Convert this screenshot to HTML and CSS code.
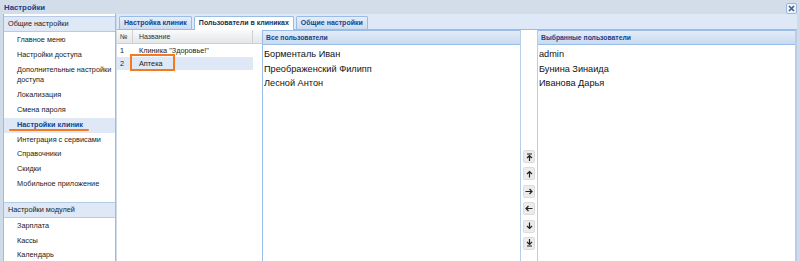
FILE: index.html
```html
<!DOCTYPE html>
<html lang="ru">
<head>
    <meta charset="UTF-8">
    <title>Настройки</title>
    <link rel="stylesheet" href="styles.css">
</head>
<body>
    <div class="window">
        <div class="titlebar">
            <span class="title">Настройки</span>
            <span class="close-btn">
                <svg width="7" height="7" viewBox="0 0 7 7"><path d="M1 1L6 6M6 1L1 6" stroke="#3a5f94" stroke-width="1.6"/></svg>
            </span>
        </div>

        <div class="main">
            <div class="sidebar">
                <div class="section-head">Общие настройки</div>
                <ul class="menu">
                    <li>Главное меню</li>
                    <li>Настройки доступа</li>
                    <li>Дополнительные настройки доступа</li>
                    <li>Локализация</li>
                    <li>Смена пароля</li>
                    <li class="active">Настройки клиник<span class="mark-line"></span></li>
                    <li>Интеграция с сервисами</li>
                    <li>Справочники</li>
                    <li>Скидки</li>
                    <li>Мобильное приложение</li>
                </ul>
                <div class="section-head">Настройки модулей</div>
                <ul class="menu">
                    <li>Зарплата</li>
                    <li>Кассы</li>
                    <li>Календарь</li>
                </ul>
            </div>

            <div class="content">
                <div class="tabs">
                    <span class="tab">Настройка клиник</span>
                    <span class="tab current">Пользователи в клиниках</span>
                    <span class="tab">Общие настройки</span>
                </div>

                <div class="tab-body">
                    <div class="grid">
                        <div class="grid-head">
                            <span class="col-num">№</span>
                            <span class="col-name">Название</span>
                            <span class="col-rest"></span>
                        </div>
                        <div class="grid-row">
                            <span class="col-num">1</span>
                            <span class="col-name">Клиника "Здоровье!"</span>
                        </div>
                        <div class="grid-row selected">
                            <span class="col-num">2</span>
                            <span class="col-name">Аптека<span class="mark-box"></span></span>
                        </div>
                    </div>

                    <div class="list-panel">
                        <div class="panel-head">Все пользователи</div>
                        <ul class="users">
                            <li>Борменталь Иван</li>
                            <li>Преображенский Филипп</li>
                            <li>Лесной Антон</li>
                        </ul>
                    </div>

                    <div class="buttons">
                        <span class="move-btn"><svg width="7" height="8" viewBox="0 0 7 8"><path d="M3.5 2.5V8M1 5L3.5 2.5L6 5M1 1H6" stroke="#222" stroke-width="1.2" fill="none"/></svg></span>
                        <span class="move-btn"><svg width="7" height="8" viewBox="0 0 7 8"><path d="M3.5 1.5V7.5M1 4L3.5 1.5L6 4" stroke="#222" stroke-width="1.2" fill="none"/></svg></span>
                        <span class="move-btn"><svg width="8" height="7" viewBox="0 0 8 7"><path d="M0.5 3.5H7M4.5 1L7 3.5L4.5 6" stroke="#222" stroke-width="1.2" fill="none"/></svg></span>
                        <span class="move-btn"><svg width="8" height="7" viewBox="0 0 8 7"><path d="M1 3.5H7.5M3.5 1L1 3.5L3.5 6" stroke="#222" stroke-width="1.2" fill="none"/></svg></span>
                        <span class="move-btn"><svg width="7" height="8" viewBox="0 0 7 8"><path d="M3.5 0.5V6.5M1 4L3.5 6.5L6 4" stroke="#222" stroke-width="1.2" fill="none"/></svg></span>
                        <span class="move-btn"><svg width="7" height="8" viewBox="0 0 7 8"><path d="M3.5 0V5.5M1 3L3.5 5.5L6 3M1 7H6" stroke="#222" stroke-width="1.2" fill="none"/></svg></span>
                    </div>

                    <div class="list-panel right">
                        <div class="panel-head">Выбранные пользователи</div>
                        <ul class="users">
                            <li>admin</li>
                            <li>Бунина Зинаида</li>
                            <li>Иванова Дарья</li>
                        </ul>
                    </div>
                </div>
            </div>
        </div>
    </div>
</body>
</html>
```

FILE: styles.css
```css
html, body { margin: 0; padding: 0; height: 100%; overflow: hidden; }
body { font-family: "Liberation Sans", Arial, sans-serif; font-size: 7.3px; color: #222; background: #d0dbe9; }

.window { display: flex; flex-direction: column; height: 300px; }
.titlebar { height: 14px; display: flex; align-items: center; justify-content: space-between; padding: 0 3px 0 4px; background: #d3dce9; }
.title { font-weight: bold; color: #15428b; font-size: 7.8px; margin-top: 1px; }
.close-btn { width: 9px; height: 9px; border: 1px solid #9fb6d6; border-radius: 2px; background: #eef3fa; display: flex; align-items: center; justify-content: center; margin-top: 3px; }

.main { flex: 1; display: flex; padding: 0 3px 0 3px; }

.sidebar { width: 111px; background: #fff; border: 1px solid #99bbe8; border-top: none; padding-top: 2px; }
.section-head { height: 14px; line-height: 14px; padding-left: 4px; background: #dfe8f6; border-top: 1px solid #b6cbe6; border-bottom: 1px solid #b6cbe6; color: #222; }
.menu { list-style: none; margin: 0; padding: 1px 0 10px 0; }
.menu li { padding: 2px 0 2px 13px; line-height: 10.8px; position: relative; }
.menu li.active { background: #dfe8f6; font-weight: bold; color: #15428b; }
.mark-line { position: absolute; left: 5px; top: 11px; width: 80px; height: 2px; background: #f47a20; border-radius: 1px; }

.content { flex: 1; display: flex; flex-direction: column; margin-left: 1px; }
.tabs { height: 15px; display: flex; align-items: flex-end; gap: 2px; padding-left: 2px; background: #dfe8f6; border-bottom: 1px solid #99bbe8; }
.tab { height: 12px; line-height: 12px; padding: 0 4px; font-weight: bold; color: #15428b; font-size: 7px; border: 1px solid #99bbe8; border-bottom: none; border-radius: 2px 2px 0 0; background: linear-gradient(#e6eef9, #ccdcf1); }
.tab.current { background: #fff; color: #15324f; position: relative; top: 1px; height: 13px; }

.tab-body { flex: 1; display: flex; background: #fff; border-right: 2px solid #b9cde8; }

.grid { width: 145px; border-right: 1px solid #99bbe8; }
.grid-head { display: flex; height: 13px; line-height: 13px; background: linear-gradient(#fafafa, #e4e6ea); border-bottom: 1px solid #d0d0d0; color: #333; font-size: 7px; }
.grid-head span { border-right: 1px solid #d0d0d0; }
.grid-head .col-rest { flex: 1; border-right: none; }
.grid-row { display: flex; height: 13px; line-height: 13px; width: 136px; font-size: 7.3px; color: #222; }
.grid-row.selected { background: #dfe8f6; }
.col-num { width: 16px; padding-left: 3px; box-sizing: border-box; }
.col-name { width: 120px; padding-left: 6px; box-sizing: border-box; position: relative; }
.mark-box { position: absolute; left: -3px; top: -3px; width: 41px; height: 13px; border: 2.5px solid #f47a20; }

.list-panel { width: 257px; border-right: 1px solid #b9cde8; }
.list-panel.right { flex: 1; border-right: none; border-left: 1px solid #b9cde8; }
.panel-head { height: 13px; line-height: 13px; padding-left: 3px; font-weight: bold; font-size: 6.8px; color: #15428b; background: linear-gradient(#e3ecf8, #c9daf0); border-top: 1px solid #99bbe8; border-bottom: 1px solid #99bbe8; }
.users { list-style: none; margin: 0; padding: 2px 0 0 1px; font-size: 9.2px; color: #111; }
.users li { height: 14.5px; line-height: 14.5px; }

.buttons { width: 16px; display: flex; flex-direction: column; align-items: center; gap: 4.4px; padding-top: 120px; }
.move-btn { width: 12px; height: 13px; box-sizing: border-box; border: 1px solid #dcdcdc; border-radius: 2px; background: #ececec; display: flex; align-items: center; justify-content: center; }
```
